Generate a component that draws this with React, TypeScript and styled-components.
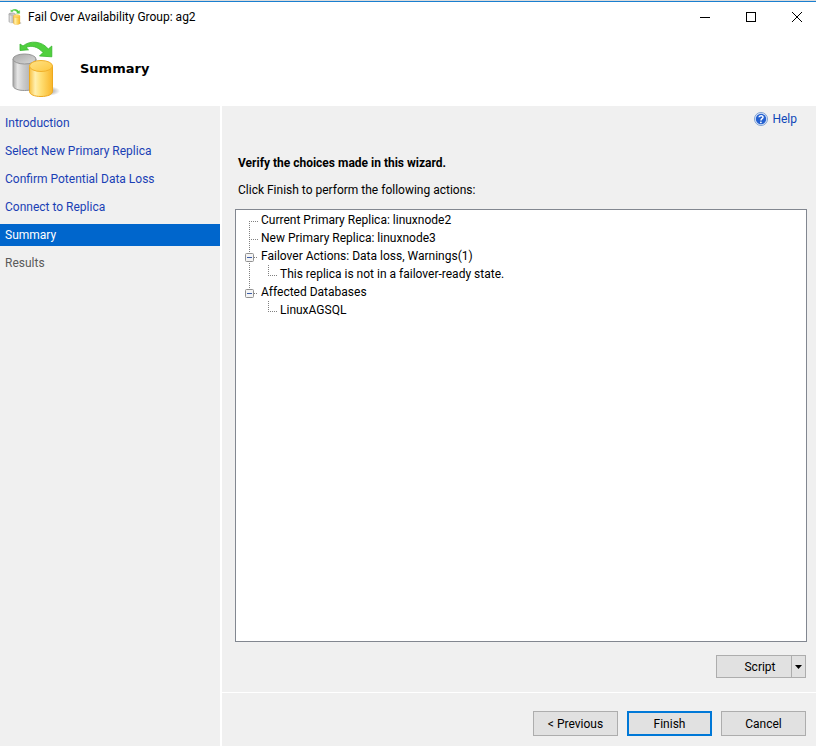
import React from 'react';
import styled, { createGlobalStyle, css } from 'styled-components';

const Global = createGlobalStyle`
  *, *::before, *::after { box-sizing: border-box; }
  body { margin: 0; background: #f0f0f0; }
  body, button { font-family: Roboto, "Segoe UI", sans-serif; font-size: 12px; line-height: 16px; color: #000; }
  ul, ol { list-style: none; margin: 0; padding: 0; }
`;

const Window = styled.div`
  min-height: 100vh;
  display: flex;
  flex-direction: column;
  background: #f0f0f0;
  border-top: 1px solid #dcdcdc;
`;

const TitleBar = styled.header`
  height: 31px;
  display: flex;
  align-items: center;
  background: #fff;
  border-top: 1px solid #1a7fd0;
  padding-left: 8px;
`;

const WindowTitle = styled.span`
  flex: 1;
  padding-left: 4px;
`;

const CaptionButton = styled.button`
  width: 46px;
  height: 29px;
  display: flex;
  align-items: center;
  justify-content: center;
  padding: 0;
  border: 0;
  background: transparent;
  &:hover { background: #e5e5e5; }
`;

const CloseButton = styled(CaptionButton)`
  width: 42px;
  padding-left: 4px;
`;

const PageHeader = styled.div`
  height: 74px;
  display: flex;
  align-items: center;
  gap: 10px;
  padding-left: 10px;
  background: #fff;
`;

const PageTitle = styled.h1`
  margin: 0;
  font: bold 13px/20px "DejaVu Sans", Tahoma, sans-serif;
`;

const Body = styled.div`
  flex: 1;
  display: flex;
`;

const Sidebar = styled.nav`
  flex: 0 0 222px;
  padding-top: 6px;
  border-right: 2px solid #fff;
`;

const StepList = styled.ol`
  display: flex;
  flex-direction: column;
  gap: 6px;
`;

type StepState = 'done' | 'current' | 'pending';

const stepLook = {
  done: css`color: #1a3fb5;`,
  current: css`color: #fff; background: #0066cc;`,
  pending: css`color: #5a5a5a;`,
};

const StepLink = styled.a<{ $state: StepState }>`
  display: block;
  padding: 3px 5px;
  text-decoration: none;
  ${({ $state }) => stepLook[$state]}
`;

const Main = styled.main`
  flex: 1;
  min-width: 0;
  display: flex;
  flex-direction: column;
`;

const Content = styled.section`
  flex: 1;
  display: flex;
  flex-direction: column;
  padding: 5px 9px 14px 13px;
`;

const HelpLink = styled.a`
  align-self: flex-end;
  display: flex;
  align-items: center;
  gap: 4px;
  margin-right: 10px;
  color: #0f47b8;
  text-decoration: none;
`;

const Heading = styled.h2`
  margin: 28px 3px 0;
  font-size: 12px;
  line-height: 16px;
  font-weight: bold;
`;

const Instruction = styled.p`
  margin: 11px 3px;
`;

const Tree = styled.ul`
  flex: 1;
  padding: 1px 8px;
  background: #fff;
  border: 1px solid #828790;
`;

const TreeRow = styled.div`
  height: 18px;
  display: flex;
  align-items: center;
`;

const Toggle = styled.button`
  display: flex;
  padding: 0;
  border: 0;
  background: transparent;
`;

const ScriptRow = styled.div`
  display: flex;
  justify-content: flex-end;
  margin: 13px 1px 0 0;
`;

const Button = styled.button<{ $primary?: boolean }>`
  width: 85px;
  height: 25px;
  padding: 0;
  background: #e1e1e1;
  border: ${({ $primary }) => ($primary ? '2px solid #0078d7' : '1px solid #adadad')};
`;

const ScriptButton = styled(Button)`
  width: 76px;
  height: 23px;
  padding-left: 12px;
`;

const MenuButton = styled(Button)`
  width: 15px;
  height: 23px;
  margin-left: -1px;
  display: flex;
  align-items: center;
  justify-content: center;
`;

const Footer = styled.footer`
  display: flex;
  justify-content: flex-end;
  gap: 9px;
  padding: 18px 10px 10px;
  border-top: 1px solid #fff;
`;

const FailoverIcon = ({ size }: { size: number }) => (
  <svg width={size} height={size} viewBox={size > 16 ? '0 0 60 60' : '0 2 57 57'} aria-hidden="true">
    <defs>
      <linearGradient id="grey" x1="0" x2="1">
        <stop offset="0" stopColor="#a6a6a6" /><stop offset=".2" stopColor="#e6e6e6" />
        <stop offset=".45" stopColor="#cccccc" /><stop offset="1" stopColor="#a0a0a0" />
      </linearGradient>
      <linearGradient id="greyTop" x1="0" x2="1" y2="1">
        <stop offset="0" stopColor="#a8a8a8" /><stop offset="1" stopColor="#dadada" />
      </linearGradient>
      <linearGradient id="gold" x1="0" x2="1">
        <stop offset="0" stopColor="#f8c040" /><stop offset=".25" stopColor="#fff0b0" />
        <stop offset=".5" stopColor="#ffdf74" /><stop offset="1" stopColor="#f9b62a" />
      </linearGradient>
      <linearGradient id="goldTop" x1="0" x2="1" y2="1">
        <stop offset="0" stopColor="#ffe387" /><stop offset="1" stopColor="#fdc740" />
      </linearGradient>
      <radialGradient id="shade">
        <stop offset="0" stopColor="#000" stopOpacity=".5" /><stop offset="1" stopColor="#000" stopOpacity="0" />
      </radialGradient>
    </defs>
    <ellipse cx="37" cy="52" rx="13" ry="5" fill="url(#shade)" />
    <path d="M3 20v26.500c0 3 5 5 11.500 5s11.500-2 11.500-5V20z" fill="url(#grey)" stroke="#989898" />
    <ellipse cx="14.500" cy="20" rx="11.500" ry="5" fill="url(#greyTop)" stroke="#969696" />
    <path d="M19.500 27v25.500c0 3 5 5 11.500 5s11.500-2 11.500-5V27z" fill="url(#gold)" stroke="#eda81e" />
    <ellipse cx="31" cy="27" rx="11.500" ry="5.500" fill="url(#goldTop)" stroke="#f1b02a" />
    <path d="M10 5v6.500l8.500-.7-2.500-2.300C21 6 28 7.500 33 13.500L29.500 17l12.300.8V7l-3.500 3C32 2 20 1 13 7z" fill="#50d03e" stroke="#35b52b" strokeWidth=".8" />
  </svg>
);

const HelpIcon = () => (
  <svg width="14" height="14" viewBox="0 0 14 14" aria-hidden="true">
    <circle cx="7" cy="7" r="6.500" fill="#dfe9f8" stroke="#7d9fd2" />
    <circle cx="7" cy="7" r="5.200" fill="#2460d0" />
    <path d="M5 5.300C5.200 3.200 9 3 9 5.200 9 6.700 7 6.700 7 8.400" fill="none" stroke="#fff" strokeWidth="1.500" />
    <circle cx="6.900" cy="10.300" r=".9" fill="#fff" />
  </svg>
);

/* Dotted branch drawn left of a tree label. */
const Branch = ({ width, d }: { width: number; d: string }) => (
  <svg width={width} height="18" shapeRendering="crispEdges" aria-hidden="true">
    <path d={d} fill="none" stroke="#808080" strokeDasharray="1 1" />
  </svg>
);

const MinusBranch = ({ last }: { last: boolean }) => (
  <svg width="17" height="18" aria-hidden="true">
    <path d={`M5.500 0V6M10 10.500H14${last ? '' : 'M5.500 16V18'}`} stroke="#808080" strokeDasharray="1 1" shapeRendering="crispEdges" />
    <rect x="1.500" y="6.500" width="8" height="8" rx="1" fill="#f4f4f4" stroke="#919191" />
    <path d="M3 10.500H8" stroke="#3d5da8" shapeRendering="crispEdges" />
  </svg>
);

const steps: { label: string; state: StepState }[] = [
  { label: 'Introduction', state: 'done' },
  { label: 'Select New Primary Replica', state: 'done' },
  { label: 'Confirm Potential Data Loss', state: 'done' },
  { label: 'Connect to Replica', state: 'done' },
  { label: 'Summary', state: 'current' },
  { label: 'Results', state: 'pending' },
];

const actions: { label: string; children?: string[] }[] = [
  { label: 'Current Primary Replica: linuxnode2' },
  { label: 'New Primary Replica: linuxnode3' },
  { label: 'Failover Actions: Data loss, Warnings(1)', children: ['This replica is not in a failover-ready state.'] },
  { label: 'Affected Databases', children: ['LinuxAGSQL'] },
];

export default function App() {
  return (
    <Window>
      <Global />
      <TitleBar>
        <FailoverIcon size={16} />
        <WindowTitle>Fail Over Availability Group: ag2</WindowTitle>
        <CaptionButton aria-label="Minimize">
          <svg width="10" height="10"><path d="M0 5.500H10" stroke="#000" /></svg>
        </CaptionButton>
        <CaptionButton aria-label="Maximize">
          <svg width="10" height="10"><rect x=".5" y=".5" width="9" height="9" fill="none" stroke="#000" /></svg>
        </CaptionButton>
        <CloseButton aria-label="Close">
          <svg width="10" height="10"><path d="M0 0L10 10M10 0L0 10" stroke="#000" /></svg>
        </CloseButton>
      </TitleBar>
      <PageHeader>
        <FailoverIcon size={60} />
        <PageTitle>Summary</PageTitle>
      </PageHeader>
      <Body>
        <Sidebar aria-label="Wizard steps">
          <StepList>
            {steps.map(({ label, state }) => (
              <li key={label}>
                <StepLink href="#" $state={state} aria-current={state === 'current' ? 'step' : undefined}>{label}</StepLink>
              </li>
            ))}
          </StepList>
        </Sidebar>
        <Main>
          <Content>
            <HelpLink href="#"><HelpIcon />Help</HelpLink>
            <Heading>Verify the choices made in this wizard.</Heading>
            <Instruction>Click Finish to perform the following actions:</Instruction>
            <Tree>
              {actions.map(({ label, children }, i) => {
                const last = i === actions.length - 1;
                return (
                  <li key={label}>
                    <TreeRow>
                      {children ? (
                        <Toggle aria-label={`Collapse ${label}`} aria-expanded="true"><MinusBranch last={last} /></Toggle>
                      ) : (
                        <Branch width={17} d={`M5.500 ${i === 0 ? 10 : 0}V18M5 10.500H14`} />
                      )}
                      {label}
                    </TreeRow>
                    {children && (
                      <ul>
                        {children.map((child) => (
                          <TreeRow as="li" key={child}>
                            <Branch width={36} d={`${last ? '' : 'M5.500 0V18'}M24.500 0V10M24 10.500H34`} />
                            {child}
                          </TreeRow>
                        ))}
                      </ul>
                    )}
                  </li>
                );
              })}
            </Tree>
            <ScriptRow>
              <ScriptButton>Script</ScriptButton>
              <MenuButton aria-label="Script options">
                <svg width="7" height="4"><path d="M0 0H7L3.500 4z" /></svg>
              </MenuButton>
            </ScriptRow>
          </Content>
          <Footer>
            <Button>&lt; Previous</Button>
            <Button $primary>Finish</Button>
            <Button>Cancel</Button>
          </Footer>
        </Main>
      </Body>
    </Window>
  );
}
